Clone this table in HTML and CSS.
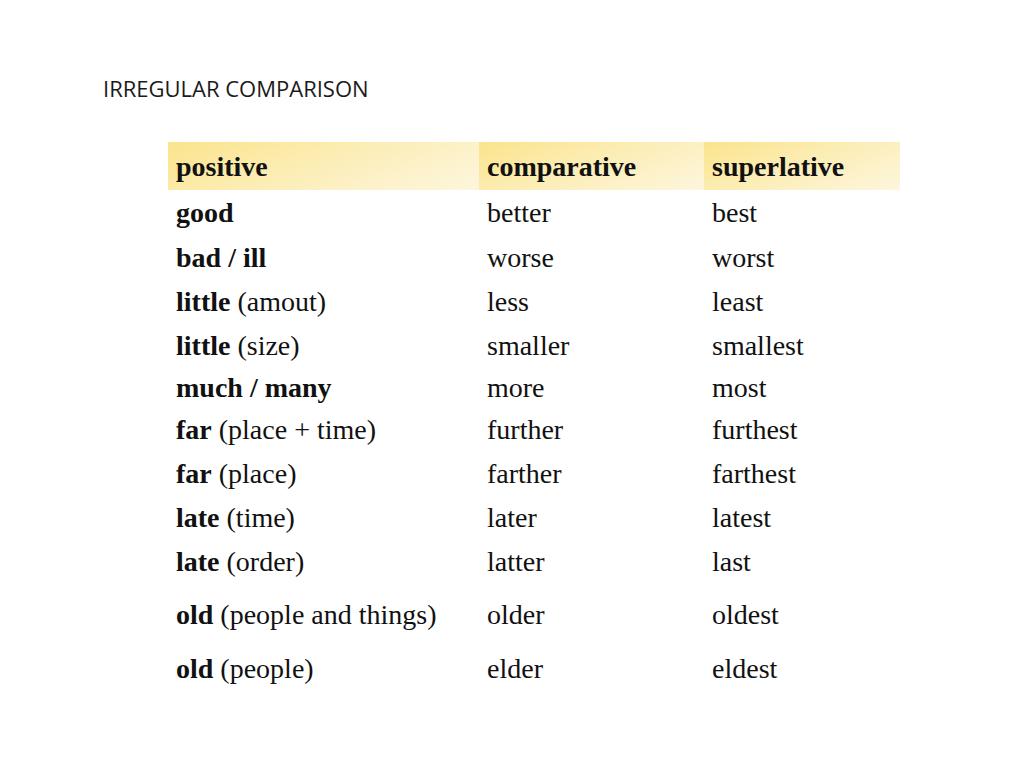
FILE: index.html
```html
<!DOCTYPE html>
<html>
<head>
<meta charset="utf-8">
<link rel="stylesheet" href="styles.css">
</head>
<body>
<div class="slide">
  <h1 class="title">IRREGULAR COMPARISON</h1>
  <table class="cmp">
    <thead>
      <tr class="head"><th class="c1">positive</th><th class="c2">comparative</th><th class="c3">superlative</th></tr>
    </thead>
    <tbody>
      <tr class="r r1"><td><b>good</b></td><td>better</td><td>best</td></tr>
      <tr class="r"><td><b>bad / ill</b></td><td>worse</td><td>worst</td></tr>
      <tr class="r"><td><b>little</b> (amout)</td><td>less</td><td>least</td></tr>
      <tr class="r"><td><b>little</b> (size)</td><td>smaller</td><td>smallest</td></tr>
      <tr class="r r5"><td><b>much / many</b></td><td>more</td><td>most</td></tr>
      <tr class="r"><td><b>far</b> (place + time)</td><td>further</td><td>furthest</td></tr>
      <tr class="r"><td><b>far</b> (place)</td><td>farther</td><td>farthest</td></tr>
      <tr class="r"><td><b>late</b> (time)</td><td>later</td><td>latest</td></tr>
      <tr class="r"><td><b>late</b> (order)</td><td>latter</td><td>last</td></tr>
      <tr class="r r10"><td><b>old</b> (people and things)</td><td>older</td><td>oldest</td></tr>
      <tr class="r r11"><td><b>old</b> (people)</td><td>elder</td><td>eldest</td></tr>
    </tbody>
  </table>
</div>
</body>
</html>
```
FILE: styles.css
```css
html, body {
  margin: 0;
  padding: 0;
  background: #ffffff;
}
.slide {
  width: 1024px;
  height: 768px;
  position: relative;
  box-sizing: border-box;
  padding-top: 73px;
}
.title {
  margin: 0 0 0 103px;
  font-family: "Open Sans", Lato, "Liberation Sans", sans-serif;
  font-weight: 400;
  font-size: 22px;
  line-height: 30px;
  color: #1a1a1a;
}
.cmp {
  margin: 39px 0 0 168px;
  border-collapse: collapse;
  border-spacing: 0;
  font-family: "Liberation Serif", "Times New Roman", serif;
  font-size: 28px;
  color: #111;
}
.cmp th, .cmp td {
  padding: 0 0 0 8px;
  text-align: left;
  vertical-align: middle;
  white-space: nowrap;
}
.cmp th {
  height: 46px;
  padding-top: 2px;
  font-weight: 700;
  background: linear-gradient(160deg, #fbe48c 0%, #fcedb4 45%, #fdf6de 100%);
}
.c1 { width: 303px; }
.c2 { width: 217px; }
.c3 { width: 188px; }
.cmp td b { font-weight: 700; }
.r td { height: 44px; }
.r1 td { height: 46px; }
.r5 td { height: 40px; }
.r10 td { height: 62px; }
.r11 td { height: 46px; }
```
